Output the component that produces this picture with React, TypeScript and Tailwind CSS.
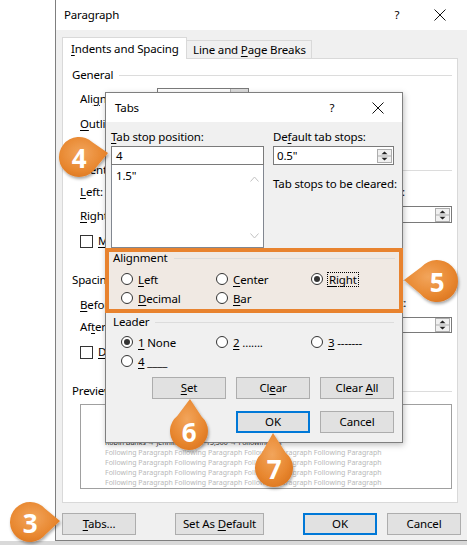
import React from "react";

function U({ children }: { children: React.ReactNode }) {
  return <span className="underline underline-offset-[2px] decoration-1">{children}</span>;
}

function Radio({ checked }: { checked?: boolean }) {
  return (
    <span className="w-[12px] h-[12px] rounded-full border border-[#333333] bg-white flex items-center justify-center shrink-0">
      {checked && <span className="w-[6px] h-[6px] rounded-full bg-[#333333]" />}
    </span>
  );
}

function RadioItem({ checked, focus, children }: { checked?: boolean; focus?: boolean; children: React.ReactNode }) {
  return (
    <div className="flex items-center gap-[5px] h-[12px]">
      <Radio checked={checked} />
      <span className={focus ? "outline-1 outline-dotted outline-black px-[1px] leading-[13px]" : "leading-[13px]"}>{children}</span>
    </div>
  );
}

function GroupHeader({ label, className }: { label: React.ReactNode; className?: string }) {
  return (
    <div className={"flex items-center " + (className ?? "h-[14px]")}>
      <span className="whitespace-nowrap">{label}</span>
      <div className="flex-1 h-px bg-[#dcdcdc] ml-[6px]" />
    </div>
  );
}

function SpinArrows() {
  return (
    <svg width="15" height="14" viewBox="0 0 15 14" className="mr-[1px] shrink-0">
      <rect x="0.5" y="0.5" width="14" height="13" fill="#f0f0f0" stroke="#adadad" />
      <line x1="1" y1="7" x2="14" y2="7" stroke="#adadad" />
      <path d="M4.5 5.2 L7.5 2.4 L10.5 5.2 Z" fill="#222" />
      <path d="M4.5 8.8 L7.5 11.6 L10.5 8.8 Z" fill="#222" />
    </svg>
  );
}

function CloseIcon() {
  return (
    <svg width="12" height="12" viewBox="0 0 12 12" className="shrink-0">
      <path d="M0.5 0.5 L11.5 11.5 M11.5 0.5 L0.5 11.5" stroke="#111" strokeWidth="1" />
    </svg>
  );
}

function Btn({ children, primary, className }: { children: React.ReactNode; primary?: boolean; className: string }) {
  return (
    <div
      className={
        "h-[22px] flex items-center justify-center bg-[#e1e1e1] " +
        (primary ? "border-2 border-[#0078d7] " : "border border-[#adadad] ") +
        className
      }
    >
      {children}
    </div>
  );
}

function ParagraphDialog() {
  const lines = [0, 1, 2, 3];
  return (
    <div className="w-[420px] shrink-0 flex flex-col border-l border-b border-[#7f7f7f] bg-[#f0f0f0]">
      <div className="h-[30px] shrink-0 bg-white flex items-center pl-[8px]">
        <span className="w-[327px]">Paragraph</span>
        <span className="w-[12px] text-center">?</span>
        <span className="ml-[31px] flex">
          <CloseIcon />
        </span>
      </div>
      <div className="flex-1 flex flex-col pl-[6px] pt-[7px]">
        <div className="flex items-end h-[21px]">
          <div className="relative z-10 -mb-px h-[22px] w-[125px] border border-b-0 border-[#d9d9d9] bg-white pl-[8px] flex items-center">
            <span>
              <U>I</U>ndents and Spacing
            </span>
          </div>
          <div className="h-[18px] w-[125px] border border-b-0 border-l-0 border-[#d9d9d9] bg-[#f0f0f0] pl-[6px] flex items-center">
            <span>
              Line and <U>P</U>age Breaks
            </span>
          </div>
        </div>
        <div className="w-[396px] h-[445px] border border-[#d9d9d9] bg-white flex flex-col pt-[9px] pl-[9px] pr-[5px]">
          <GroupHeader label="General" />
          <div className="mt-[6px] h-[22px] flex items-center pl-[8px]">
            <span className="w-[77px]">
              Ali<U>g</U>nment:
            </span>
            <div className="w-[92px] h-[22px] border border-[#7a7a7a] bg-white flex justify-end">
              <div className="w-[18px] bg-[#dcdcdc] border-l border-[#adadad]" />
            </div>
          </div>
          <div className="mt-[3px] h-[22px] flex items-center pl-[8px]">
            <span>
              <U>O</U>utline level:
            </span>
          </div>
          <GroupHeader label="Indentation" className="mt-[28px] h-[14px]" />
          <div className="mt-[4px] h-[22px] flex items-center justify-between pl-[8px]">
            <span>
              <U>L</U>eft:
            </span>
            <div className="w-[70px] pl-[7px]">By:</div>
          </div>
          <div className="mt-[2px] h-[22px] flex items-start justify-between pl-[8px]">
            <span className="leading-[22px]">
              <U>R</U>ight:
            </span>
            <div className="mt-[1px] w-[70px] h-[17px] border border-[#7a7a7a] bg-white flex items-center justify-end">
              <SpinArrows />
            </div>
          </div>
          <div className="mt-[7px] h-[14px] flex items-center pl-[8px] gap-[5px]">
            <span className="w-[13px] h-[13px] border border-[#333333] bg-white" />
            <span>
              <U>M</U>irror indents
            </span>
          </div>
          <GroupHeader label="Spacing" className="mt-[25px] h-[14px]" />
          <div className="mt-[7px] h-[22px] flex items-center justify-between pl-[8px]">
            <span>
              <U>B</U>efore:
            </span>
            <div className="w-[70px] pl-[10px] -mt-[4px]">At:</div>
          </div>
          <div className="h-[22px] flex items-start justify-between pl-[8px]">
            <span className="leading-[22px]">
              Af<U>t</U>er:
            </span>
            <div className="mt-[1px] w-[70px] h-[16px] border border-[#7a7a7a] bg-white flex items-center justify-end">
              <SpinArrows />
            </div>
          </div>
          <div className="mt-[7px] h-[14px] flex items-center pl-[8px] gap-[5px]">
            <span className="w-[13px] h-[13px] border border-[#333333] bg-white" />
            <span>
              <U>D</U>on't add space between paragraphs of the same style
            </span>
          </div>
          <GroupHeader label="Preview" className="mt-[25px] h-[14px]" />
          <div className="mt-[6px] ml-[8px] w-[372px] h-[85px] border border-[#a0a0a0] bg-white pl-[24px] pt-[33px] text-[7px] leading-[10px] tracking-normal overflow-hidden">
            <div className="text-[#333333]">Robin Banks → Jennifer Lee → 15,500 → Following For</div>
            {lines.map((i) => (
              <div key={i} className="text-[#b8b8b8]">
                Following Paragraph Following Paragraph Following Paragraph Following Paragraph
              </div>
            ))}
          </div>
        </div>
        <div className="mt-[10px] flex h-[22px]">
          <Btn className="w-[74px]">
            <span>
              <U>T</U>abs...
            </span>
          </Btn>
          <Btn className="w-[89px] ml-[39px]">
            <span>
              Set As <U>D</U>efault
            </span>
          </Btn>
          <Btn primary className="w-[74px] ml-[39px]">
            OK
          </Btn>
          <Btn className="w-[74px] ml-[10px]">Cancel</Btn>
        </div>
      </div>
    </div>
  );
}

function Chevron({ up }: { up?: boolean }) {
  return (
    <svg width="9" height="6" viewBox="0 0 9 6">
      <path d={up ? "M0.5 5.5 L4.5 1 L8.5 5.5" : "M0.5 0.5 L4.5 5 L8.5 0.5"} fill="none" stroke="#c2c2c2" strokeWidth="1" />
    </svg>
  );
}

function TabsDialog() {
  return (
    <div className="absolute left-[105px] top-[92px] w-[298px] h-[351px] border border-[#7f7f7f] bg-[#f0f0f0] shadow-[1px_2px_6px_rgba(0,0,0,0.25)] flex flex-col">
      <div className="h-[29px] shrink-0 bg-white flex items-center pl-[9px]">
        <span className="w-[211px]">Tabs</span>
        <span className="w-[12px] text-center">?</span>
        <span className="ml-[34px] flex">
          <CloseIcon />
        </span>
      </div>
      <div className="flex pt-[8px] pl-[5px] pr-[8px] gap-[9px]">
        <div className="w-[153px] flex flex-col">
          <span className="h-[14px]">
            <U>T</U>ab stop position:
          </span>
          <div className="mt-[2px] h-[19px] border border-[#7a7a7a] bg-white pl-[4px] flex items-center">4</div>
          <div className="h-[83px] border border-t-0 border-[#828790] bg-white flex">
            <div className="flex-1 pl-[4px] pt-[4px]">1.5"</div>
            <div className="w-[17px] flex flex-col items-center justify-between pt-[11px] pb-[8px]">
              <Chevron up />
              <Chevron />
            </div>
          </div>
        </div>
        <div className="w-[121px] flex flex-col">
          <span className="h-[14px]">
            De<U>f</U>ault tab stops:
          </span>
          <div className="mt-[2px] h-[19px] border border-[#7a7a7a] bg-white pl-[3px] flex items-center justify-between">
            <span>0.5"</span>
            <SpinArrows />
          </div>
          <span className="mt-[12px] h-[14px]">Tab stops to be cleared:</span>
        </div>
      </div>
      <div className="-mx-px h-[65px] border-[4px] border-[#e8832f] bg-[#f0e9e3] flex flex-col pl-[4px] pr-[4px]">
        <GroupHeader label="Alignment" className="h-[12px]" />
        <div className="mt-[9px] pl-[8px] grid grid-cols-[95px_95px_auto]">
          <RadioItem>
            <U>L</U>eft
          </RadioItem>
          <RadioItem>
            <U>C</U>enter
          </RadioItem>
          <RadioItem checked focus>
            <U>R</U>ight
          </RadioItem>
        </div>
        <div className="mt-[7px] pl-[8px] grid grid-cols-[95px_95px_auto]">
          <RadioItem>
            <U>D</U>ecimal
          </RadioItem>
          <RadioItem>
            <U>B</U>ar
          </RadioItem>
        </div>
      </div>
      <div className="flex flex-col pl-[7px] pr-[8px]">
        <GroupHeader label="Leader" className="mt-[2px] h-[14px]" />
        <div className="mt-[7px] pl-[8px] grid grid-cols-[95px_95px_auto]">
          <RadioItem checked>
            <U>1</U> None
          </RadioItem>
          <RadioItem>
            <U>2</U> .......
          </RadioItem>
          <RadioItem>
            <U>3</U> -------
          </RadioItem>
        </div>
        <div className="mt-[7px] pl-[8px]">
          <RadioItem>
            <U>4</U> ____
          </RadioItem>
        </div>
        <div className="mt-[10px] flex justify-end gap-[10px]">
          <Btn className="w-[74px]">
            <span>
              <U>S</U>et
            </span>
          </Btn>
          <Btn className="w-[74px]">
            <span>
              Cl<U>e</U>ar
            </span>
          </Btn>
          <Btn className="w-[74px]">
            <span>
              Clear <U>A</U>ll
            </span>
          </Btn>
        </div>
        <div className="mt-[12px] flex justify-end gap-[10px]">
          <Btn primary className="w-[74px]">
            OK
          </Btn>
          <Btn className="w-[74px]">Cancel</Btn>
        </div>
      </div>
    </div>
  );
}

type BadgeDef = { n: string; cx: number; cy: number; r: number; tx: number; ty: number };

function badgePath(b: BadgeDef, spread = 0.7) {
  const a = Math.atan2(b.ty - b.cy, b.tx - b.cx);
  const p1x = b.cx + b.r * Math.cos(a - spread);
  const p1y = b.cy + b.r * Math.sin(a - spread);
  const p2x = b.cx + b.r * Math.cos(a + spread);
  const p2y = b.cy + b.r * Math.sin(a + spread);
  return `M${p1x} ${p1y} L${b.tx} ${b.ty} L${p2x} ${p2y} A${b.r} ${b.r} 0 1 1 ${p1x} ${p1y} Z`;
}

function Badges() {
  const badges: BadgeDef[] = [
    { n: "4", cx: 79, cy: 157, r: 20, tx: 108, ty: 153 },
    { n: "5", cx: 437, cy: 281, r: 21, tx: 404, ty: 280 },
    { n: "6", cx: 189, cy: 431, r: 19, tx: 190, ty: 399 },
    { n: "7", cx: 274, cy: 468, r: 19, tx: 273, ty: 433 },
    { n: "3", cx: 30, cy: 522, r: 20, tx: 60, ty: 521 },
  ];
  return (
    <svg className="absolute inset-0 pointer-events-none" width="467" height="545" viewBox="0 0 467 545">
      <defs>
        <radialGradient id="bg" cx="0.45" cy="0.4" r="0.65">
          <stop offset="0" stopColor="#f2a55c" />
          <stop offset="0.7" stopColor="#e8872f" />
          <stop offset="1" stopColor="#dc7722" />
        </radialGradient>
        <filter id="sh" x="-30%" y="-30%" width="160%" height="160%">
          <feDropShadow dx="1" dy="2" stdDeviation="1.5" floodColor="#000" floodOpacity="0.35" />
        </filter>
      </defs>
      {badges.map((b) => (
        <g key={b.n}>
          <path d={badgePath(b)} fill="url(#bg)" filter="url(#sh)" />
          <text
            x={b.cx}
            y={b.cy + 1}
            textAnchor="middle"
            dominantBaseline="central"
            fill="#ffffff"
            fontSize="26"
            fontWeight="700"
            fontFamily="'Open Sans', 'Noto Sans', sans-serif"
          >
            {b.n}
          </text>
        </g>
      ))}
    </svg>
  );
}

export default function App() {
  return (
    <div className="relative w-[467px] h-[545px] overflow-hidden bg-white text-[11.5px] tracking-[-0.15px] leading-[14px] text-black whitespace-nowrap [font-family:'Noto_Sans',sans-serif]">
      <div className="flex h-[541px]">
        <div className="w-[55px] shrink-0 bg-white" />
        <ParagraphDialog />
      </div>
      <div className="h-[4px] bg-[#d9d9d9]" />
      <TabsDialog />
      <Badges />
    </div>
  );
}
